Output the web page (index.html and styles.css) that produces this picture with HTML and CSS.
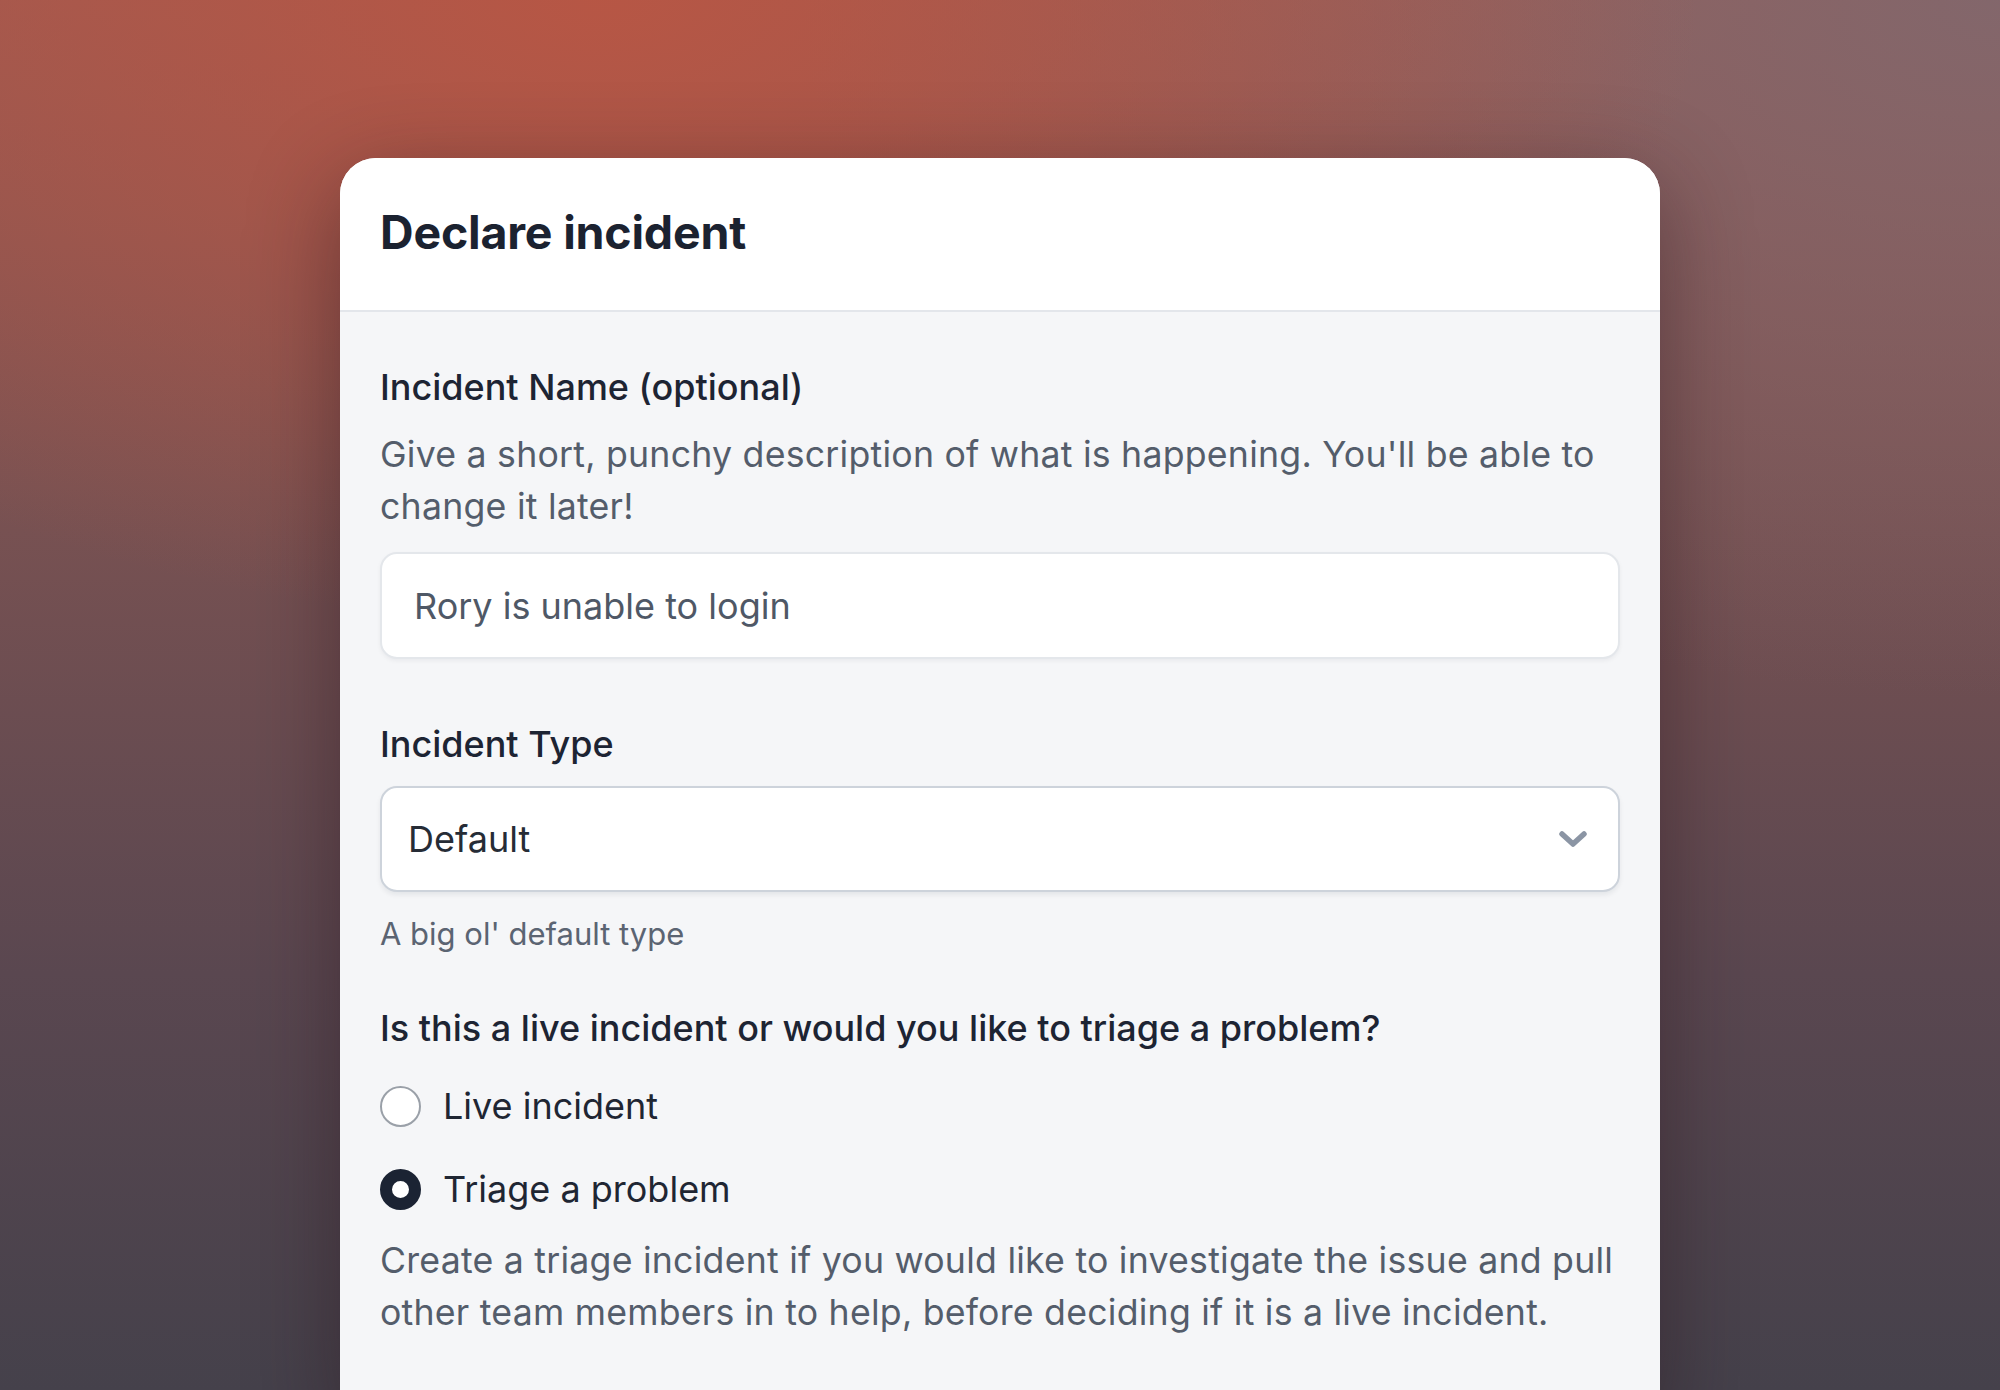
FILE: index.html
```html
<!DOCTYPE html>
<html lang="en">
<head>
  <meta charset="UTF-8" />
  <title>Declare incident</title>
  <link rel="stylesheet" href="styles.css">
</head>
<body>
  <div class="modal">
    <!-- Header -->
    <div class="modal-header">
      <h2>Declare incident</h2>
    </div>

    <!-- Form body -->
    <div class="modal-body">
      <label class="field-label" for="incident-name">Incident Name (optional)</label>
      <p class="field-help">Give a short, punchy description of what is happening. You'll be able to change it later!</p>
      <input type="text" id="incident-name" class="text-input" value="Rory is unable to login" />

      <label class="field-label type-label" for="incident-type">Incident Type</label>
      <div class="select-wrap">
        <select id="incident-type" class="select-input">
          <option>Default</option>
        </select>
        <svg class="chevron" width="30" height="18" viewBox="0 0 30 18">
          <polyline points="4,3 15,13 26,3" fill="none" stroke="#8b95a4" stroke-width="5.5" stroke-linecap="round" stroke-linejoin="round" />
        </svg>
      </div>
      <div class="field-hint">A big ol' default type</div>

      <div class="field-label question">Is this a live incident or would you like to triage a problem?</div>
      <label class="radio-row">
        <input type="radio" name="mode" class="radio" />
        <span>Live incident</span>
      </label>
      <label class="radio-row second">
        <input type="radio" name="mode" class="radio" checked />
        <span>Triage a problem</span>
      </label>
      <p class="field-help triage-help">Create a triage incident if you would like to investigate the issue and pull other team members in to help, before deciding if it is a live incident.</p>
    </div>
  </div>
</body>
</html>
```

FILE: styles.css
```css
body {
  margin: 0; /* no default margin */
  height: 1390px; /* full window */
  overflow: hidden; /* card runs off the bottom */
  font-family: Inter, "Noto Sans", sans-serif;
  background:
    radial-gradient(ellipse 55% 45% at 30% 0%, rgba(184, 86, 68, 0.95) 0%, rgba(184, 86, 68, 0) 100%),
    radial-gradient(ellipse 60% 50% at 100% 0%, rgba(128, 104, 110, 0.9) 0%, rgba(128, 104, 110, 0) 100%),
    linear-gradient(to bottom, #9c5a52 0%, #7a5252 35%, #5a4750 70%, #45414b 100%);
}

.modal {
  width: 1320px; /* fixed width */
  margin: 158px auto 0; /* centred, offset from top */
  background-color: #f5f6f8; /* body grey */
  border-radius: 36px 36px 0 0; /* rounded top */
  box-shadow: 0 24px 90px rgba(40, 18, 24, 0.45); /* soft shadow */
  overflow: hidden;
}

.modal-header {
  background-color: #ffffff;
  padding: 46px 40px 50px;
  border-bottom: 2px solid #e3e6eb;
}

.modal-header h2 {
  margin: 0;
  font-size: 46.5px;
  line-height: 56px;
  font-weight: 700;
  color: #1b2230;
  letter-spacing: -0.2px;
}

.modal-body {
  padding: 53px 40px 80px;
}

.field-label {
  display: block;
  font-size: 36px;
  line-height: 44px;
  font-weight: 500;
  color: #1d2433;
}

.field-help {
  margin: 19px 0 0;
  font-size: 35.7px;
  line-height: 52px;
  letter-spacing: 0.22px;
  color: #545d6b;
}

.text-input {
  display: block;
  box-sizing: border-box;
  width: 100%;
  height: 107px;
  margin-top: 20px;
  padding: 0 32px;
  font-family: inherit;
  font-size: 36px;
  color: #4f5866;
  background-color: #ffffff;
  border: 2px solid #e4e7eb;
  border-radius: 17px;
  box-shadow: 0 2px 4px rgba(16, 24, 40, 0.05);
  outline: none;
}

.type-label {
  margin-top: 63px;
}

.select-wrap {
  position: relative;
  margin-top: 20px;
}

.select-input {
  display: block;
  box-sizing: border-box;
  width: 100%;
  height: 106px;
  padding: 0 26px;
  font-family: inherit;
  font-size: 36px;
  color: #262c36;
  background-color: #ffffff;
  border: 2px solid #cdd3db;
  border-radius: 17px;
  box-shadow: 0 3px 5px rgba(16, 24, 40, 0.07);
  appearance: none;
  outline: none;
}

.chevron {
  position: absolute; /* sits over the select */
  right: 32px;
  top: 45px;
}

.field-hint {
  margin-top: 22px;
  font-size: 31px;
  line-height: 40px;
  color: #5b6472;
}

.question {
  margin-top: 52px;
}

.radio-row {
  display: flex;
  align-items: center;
  gap: 22px;
  height: 44px;
  margin-top: 34px;
  font-size: 36px;
  color: #1f2633;
}

.radio-row.second {
  margin-top: 39px;
}

.radio {
  appearance: none;
  box-sizing: border-box;
  width: 41px;
  height: 41px;
  margin: 0;
  border: 2px solid #9aa0a8;
  border-radius: 50%;
  background-color: #ffffff;
}

.radio:checked {
  border: 12px solid #1b2333;
  background-color: #ffffff;
}

.triage-help {
  margin-top: 23px;
}
```
